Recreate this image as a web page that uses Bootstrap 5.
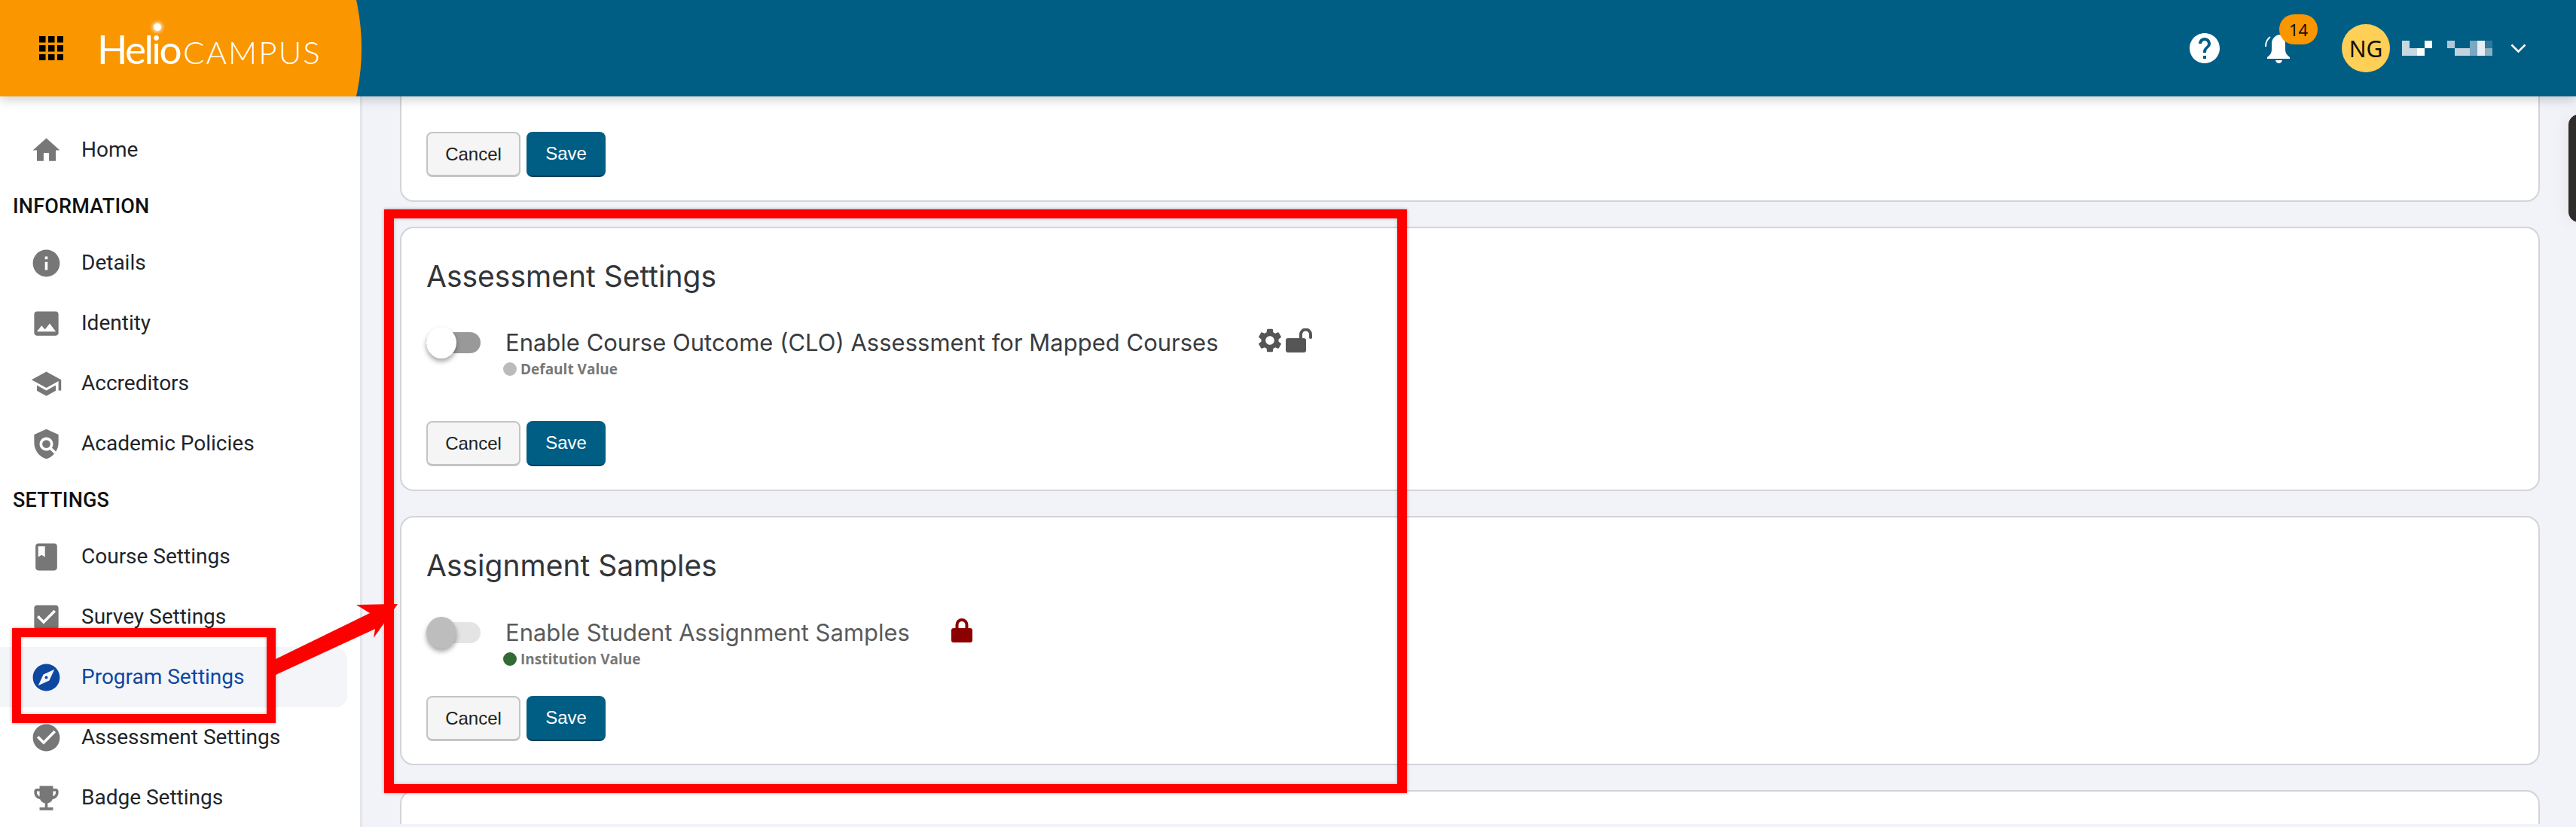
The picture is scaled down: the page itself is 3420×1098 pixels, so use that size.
<!DOCTYPE html>
<html lang="en">
<head>
<meta charset="utf-8">
<title>HelioCampus Program Settings</title>
<link href="https://cdn.jsdelivr.net/npm/bootstrap@5.3.0/dist/css/bootstrap.min.css" rel="stylesheet">
<style>
html,body{height:1098px;overflow:hidden}
body{background:#f1f3f8;font-family:Roboto,"Liberation Sans",sans-serif;color:#212529;position:relative}
.hc-top{height:128px;background:#005e85;box-shadow:0 4px 14px rgba(0,0,0,.2);position:relative;z-index:5}
.hc-brand{width:480px;height:128px;background:#fa9600;clip-path:circle(296px at 184px 64px);padding-left:52px;gap:45px}
.hc-logo{color:#fff;font-family:Lato,sans-serif;line-height:1;position:relative;white-space:nowrap}
.hc-helio{font-size:53px;letter-spacing:-2.6px;font-weight:400}
.hc-campus{font-size:42px;font-weight:300;letter-spacing:2.1px;margin-left:4px}
.hc-spark{position:absolute;left:75px;top:-7px;width:10px;height:10px;border-radius:50%;background:#fff;box-shadow:0 0 4px 2px rgba(255,255,255,.7)}
.hc-tools{padding-right:66px;font-family:"Noto Sans",sans-serif}
.hc-bell{position:relative;width:38px;height:40px;margin-left:59px}
.hc-count{position:absolute;left:20px;top:-25px;width:51px;height:40px;background:#fa9600;border-radius:20px;color:#111;font-size:22px;line-height:40px;text-align:center}
.hc-avatar{width:64px;height:64px;border-radius:50%;background:#ffd055;color:#111;font-size:30px;margin-left:65px}
.hc-body{height:970px;overflow:hidden}
.hc-side{width:481px;flex:none;background:#fff;border-right:3px solid #e3e5ea;padding-top:31px;overflow:hidden}
.hc-item{height:80px;margin-right:17px;padding-left:40px;gap:25px;font-size:28px;color:#212529;border-radius:0 16px 16px 0;text-decoration:none}
.hc-item svg{width:43px;height:43px;fill:#777;flex:none;display:block}
.hc-item.hc-on{background:#f4f5f8;color:#0d47a1}
.hc-item.hc-on svg{fill:#0d47a1}
.hc-sec{font-size:27px;font-weight:500;color:#111;height:70px;padding-left:17px;letter-spacing:.2px}
.hc-main{padding-left:50px;padding-right:48px;min-width:0;overflow:hidden}
.hc-panel{border:2px solid #d2d4d8;border-radius:18px;background:#fff;padding:0 33px;margin-bottom:33px;flex:none}
.hc-panel-a{border-top:0;border-radius:0 0 18px 18px;height:140px;padding-top:47px}
.hc-panel-b{height:351px;padding-top:36px}
.hc-panel-c{height:331px;padding-top:36px}
.hc-panel-d{height:45px;margin-bottom:0;border-bottom:0;border-radius:18px 18px 0 0}
.hc-title{font-family:Inter,sans-serif;font-size:39px;font-weight:400;color:#333538;line-height:56px;margin:0}
.hc-row{margin-top:39px;height:125px}
.hc-panel-c .hc-row{margin-top:40px;height:105px}
.hc-switch{width:72px;height:28px;border-radius:14px;background:#999;position:relative;margin-top:7px;flex:none}
.hc-switch::after{content:"";position:absolute;left:0;top:-7px;width:40px;height:42px;border-radius:50%;background:#fff;box-shadow:0 4px 6px rgba(0,0,0,.35)}
.hc-switch.hc-off{background:#e4e4e4}
.hc-switch.hc-off::after{background:#bdbdbd}
.hc-label{font-family:Inter,sans-serif;font-size:31px;line-height:42px;color:#3a3c3e;margin-left:33px}
.hc-panel-c .hc-label{color:#5a5a5a}
.hc-note{font-family:"Open Sans",sans-serif;font-size:19px;font-weight:700;color:#777;line-height:24px;margin-left:102px;margin-top:2px;gap:5px}
.hc-dot{width:18px;height:18px;border-radius:50%;background:#bbb;flex:none;margin-top:3px}
.hc-dot.hc-green{background:#336b36}
.hc-acts{gap:8px}
.hc-acts .btn{height:60px;font-family:"Liberation Sans",sans-serif;font-size:24px;border-radius:8px;padding:0;line-height:56px}
.hc-cancel{width:125px;background:#f5f5f5;border:2px solid #c4c4c4;border-bottom-width:3px;color:#222}
.hc-save{width:105px;background:#005e85;border:0;border-bottom:2px solid #00405c;color:#fff}
.hc-gear{width:32px;height:32px;fill:#555;display:block;margin-left:52px;margin-top:2px}
.hc-unlock{margin-left:5px;margin-top:2px}
.hc-lock{margin-left:55px;margin-top:2px}
.hc-mark{position:absolute;border:12px solid #f00;box-shadow:0 0 4px rgba(0,0,0,.35),inset 0 0 4px rgba(0,0,0,.25);z-index:9;pointer-events:none}
.hc-mark-a{left:16px;top:834px;width:350px;height:126px}
.hc-mark-b{left:510px;top:278px;width:1358px;height:775px;border-width:12px 13px}
.hc-arrow{position:absolute;left:0;top:0;z-index:10;pointer-events:none}
.hc-tab{position:absolute;left:3410px;top:152px;width:20px;height:143px;background:#2f2b2b;border-radius:14px 0 0 14px;z-index:3;box-shadow:0 0 24px rgba(0,0,0,.07)}
</style>
</head>
<body>
<header class="hc-top d-flex justify-content-between align-items-center">
  <div class="hc-brand d-flex align-items-center">
    <svg width="32" height="32" viewBox="0 0 32 32" aria-hidden="true"><g fill="#000"><rect width="8.5" height="8.5"/><rect x="12" width="8.5" height="8.5"/><rect x="24" width="8.5" height="8.5"/><rect y="12" width="8.5" height="8.5"/><rect x="12" y="12" width="8.5" height="8.5"/><rect x="24" y="12" width="8.5" height="8.5"/><rect y="24" width="8.5" height="8.5"/><rect x="12" y="24" width="8.5" height="8.5"/><rect x="24" y="24" width="8.5" height="8.5"/></g></svg>
    <div class="hc-logo"><span class="hc-spark"></span><span class="hc-helio">Helio</span><span class="hc-campus">CAMPUS</span></div>
  </div>
  <div class="hc-tools d-flex align-items-center">
    <svg width="40" height="40" viewBox="2 2 20 20" fill="#fff" aria-hidden="true"><path d="M12 2C6.48 2 2 6.48 2 12s4.48 10 10 10 10-4.48 10-10S17.52 2 12 2zm1 17h-2v-2h2v2zm2.07-7.75l-.9.92C13.45 12.9 13 13.5 13 15h-2v-.5c0-1.1.45-2.1 1.17-2.83l1.24-1.26c.37-.36.59-.86.59-1.41 0-1.1-.9-2-2-2s-2 .9-2 2H8c0-2.21 1.79-4 4-4s4 1.79 4 4c0 .88-.36 1.68-.93 2.25z"/></svg>
    <div class="hc-bell">
      <svg width="38" height="40" viewBox="0 0 38 40" aria-hidden="true"><path fill="#fff" d="M20 2c-6 1-10 6-10 12v8c0 4-2 7-6 10v2h30v-2c-4-3-6-6-6-10v-8c0-6-3-11-8-12z"/><path fill="#fff" d="M15 36h9c-.5 2.500-2.500 4-4.500 4S15.500 38.500 15 36z"/><path fill="none" stroke="#fff" stroke-width="2" d="M2 18c0-5 2-10 6-13"/></svg>
      <span class="hc-count">14</span>
    </div>
    <div class="hc-avatar d-flex align-items-center justify-content-center">NG</div>
    <svg class="ms-3" width="120" height="20" viewBox="0 0 120 20" aria-hidden="true"><rect width="10" height="10" fill="#c8d8e2"/><rect x="30" width="10" height="10" fill="#fff"/><rect y="10" width="20" height="10" fill="#c8d8e2"/><rect x="20" y="10" width="10" height="10" fill="#fff"/><rect x="60" width="10" height="10" fill="#b0c8d6"/><rect x="90" width="10" height="20" fill="#7aa8c0"/><rect x="100" width="10" height="20" fill="#e6eef3"/><rect x="110" width="10" height="10" fill="#2f7a9c"/><rect x="70" y="10" width="20" height="10" fill="#c0d4df"/><rect x="110" y="10" width="10" height="10" fill="#8ab0c6"/></svg>
    <svg class="ms-4" width="21" height="12" viewBox="0 0 21 12" aria-hidden="true"><path d="M1.500 1.500l9 9 9-9" fill="none" stroke="#fff" stroke-width="2.500"/></svg>
  </div>
</header>

<div class="hc-body d-flex">
  <nav class="hc-side">
    <a class="hc-item d-flex align-items-center" href="#"><svg viewBox="0 0 24 24"><path d="M10 20v-6h4v6h5v-8h3L12 3 2 12h3v8z"/></svg>Home</a>
    <div class="hc-sec d-flex align-items-center">INFORMATION</div>
    <a class="hc-item d-flex align-items-center" href="#"><svg viewBox="0 0 24 24"><path d="M12 2C6.480 2 2 6.480 2 12s4.480 10 10 10 10-4.480 10-10S17.520 2 12 2zm1 15h-2v-6h2v6zm0-8h-2V7h2v2z"/></svg>Details</a>
    <a class="hc-item d-flex align-items-center" href="#"><svg viewBox="0 0 24 24"><path d="M21 19V5c0-1.100-.9-2-2-2H5c-1.100 0-2 .9-2 2v14c0 1.100.9 2 2 2h14c1.100 0 2-.9 2-2zM8.500 13.500l2.500 3.010L14.500 12l4.500 6H5l3.500-4.500z"/></svg>Identity</a>
    <a class="hc-item d-flex align-items-center" href="#"><svg viewBox="0 0 24 24"><path d="M5 13.180v4L12 21l7-3.820v-4L12 17l-7-3.820zM12 3L1 9l11 6 9-4.910V17h2V9L12 3z"/></svg>Accreditors</a>
    <a class="hc-item d-flex align-items-center" href="#"><svg viewBox="0 0 24 24"><path d="M21 5l-9-4-9 4v6c0 5.550 3.840 10.740 9 12 2.300-.56 4.330-1.900 5.880-3.710l-3.120-3.120c-1.940 1.290-4.580 1.070-6.290-.64-1.950-1.950-1.950-5.120 0-7.070 1.950-1.950 5.120-1.950 7.070 0 1.710 1.710 1.920 4.350.64 6.290l2.900 2.900C20.290 15.690 21 13.380 21 11V5z"/><circle cx="12" cy="12" r="3"/></svg>Academic Policies</a>
    <div class="hc-sec d-flex align-items-center">SETTINGS</div>
    <a class="hc-item d-flex align-items-center" href="#"><svg viewBox="0 0 24 24"><path d="M18 2H6c-1.100 0-2 .9-2 2v16c0 1.100.9 2 2 2h12c1.100 0 2-.9 2-2V4c0-1.100-.9-2-2-2zM6 4h5v8l-2.500-1.500L6 12V4z"/></svg>Course Settings</a>
    <a class="hc-item d-flex align-items-center" href="#"><svg viewBox="0 0 24 24"><path d="M19 3H5c-1.110 0-2 .9-2 2v14c0 1.100.89 2 2 2h14c1.110 0 2-.9 2-2V5c0-1.100-.89-2-2-2zm-9 14l-5-5 1.410-1.410L10 14.170l7.590-7.590L19 8l-9 9z"/></svg>Survey Settings</a>
    <a class="hc-item hc-on d-flex align-items-center" href="#"><svg viewBox="0 0 24 24"><path d="M12 10.900c-.61 0-1.100.49-1.100 1.100s.49 1.100 1.100 1.100c.61 0 1.100-.49 1.100-1.100s-.49-1.100-1.100-1.100zM12 2C6.480 2 2 6.480 2 12s4.480 10 10 10 10-4.480 10-10S17.520 2 12 2zm2.190 12.190L6 18l3.810-8.190L18 6l-3.810 8.190z"/></svg>Program Settings</a>
    <a class="hc-item d-flex align-items-center" href="#"><svg viewBox="0 0 24 24"><path d="M12 2C6.480 2 2 6.480 2 12s4.480 10 10 10 10-4.480 10-10S17.520 2 12 2zm-2 15l-5-5 1.410-1.410L10 14.170l7.590-7.590L19 8l-9 9z"/></svg>Assessment Settings</a>
    <a class="hc-item d-flex align-items-center" href="#"><svg viewBox="0 0 24 24"><path d="M19 5h-2V3H7v2H5c-1.100 0-2 .9-2 2v1c0 2.550 1.920 4.630 4.390 4.940.63 1.500 1.980 2.630 3.610 2.960V19H7v2h10v-2h-4v-3.100c1.630-.33 2.980-1.460 3.610-2.960C19.080 12.630 21 10.550 21 8V7c0-1.100-.9-2-2-2zM5 8V7h2v3.820C5.840 10.400 5 9.300 5 8zm14 0c0 1.300-.84 2.400-2 2.820V7h2v1z"/></svg>Badge Settings</a>
  </nav>

  <main class="hc-main flex-grow-1 d-flex flex-column">
    <section class="hc-panel hc-panel-a">
      <div class="hc-acts d-flex"><button class="btn hc-cancel">Cancel</button><button class="btn hc-save">Save</button></div>
    </section>
    <section class="hc-panel hc-panel-b">
      <h4 class="hc-title">Assessment Settings</h4>
      <div class="hc-row">
        <div class="d-flex align-items-start">
          <span class="hc-switch"></span>
          <span class="hc-label">Enable Course Outcome (CLO) Assessment for Mapped Courses</span>
          <svg class="hc-gear" viewBox="2.500 2 19 20"><path d="M19.140 12.940c.04-.3.060-.61.060-.94 0-.32-.02-.64-.07-.94l2.030-1.580c.18-.14.23-.41.120-.61l-1.920-3.320c-.12-.22-.37-.29-.59-.22l-2.390.96c-.5-.38-1.030-.7-1.620-.94l-.36-2.540c-.04-.24-.24-.41-.48-.41h-3.840c-.24 0-.43.170-.47.410l-.36 2.540c-.59.24-1.130.57-1.620.94l-2.390-.96c-.22-.08-.47 0-.59.220L2.740 8.870c-.12.210-.08.470.120.610l2.030 1.580c-.05.3-.09.63-.09.94s.02.640.07.940l-2.030 1.580c-.18.140-.23.410-.12.610l1.920 3.320c.12.220.37.290.59.220l2.390-.96c.5.380 1.030.7 1.620.94l.36 2.540c.05.240.24.410.48.410h3.840c.24 0 .44-.17.47-.41l.36-2.540c.59-.24 1.130-.56 1.620-.94l2.390.96c.22.080.47 0 .59-.22l1.920-3.320c.12-.22.070-.47-.12-.61l-2.010-1.580zM12 15.600c-1.980 0-3.600-1.620-3.600-3.600s1.620-3.600 3.600-3.600 3.600 1.620 3.600 3.600-1.620 3.600-3.600 3.600z"/></svg>
          <svg class="hc-unlock" width="36" height="32" viewBox="0 0 36 32"><rect y="13" width="27" height="19" rx="3" fill="#555"/><path d="M20 14V8a6.500 6.500 0 0 1 13 0v4" fill="none" stroke="#555" stroke-width="4" stroke-linecap="round"/></svg>
        </div>
        <div class="d-flex hc-note"><span class="hc-dot"></span>Default Value</div>
      </div>
      <div class="hc-acts d-flex"><button class="btn hc-cancel">Cancel</button><button class="btn hc-save">Save</button></div>
    </section>
    <section class="hc-panel hc-panel-c">
      <h4 class="hc-title">Assignment Samples</h4>
      <div class="hc-row">
        <div class="d-flex align-items-start">
          <span class="hc-switch hc-off"></span>
          <span class="hc-label">Enable Student Assignment Samples</span>
          <svg class="hc-lock" width="28" height="32" viewBox="0 0 28 32"><rect y="13" width="28" height="19" rx="3" fill="#8b0000"/><path d="M7.500 14V8.500a6.500 6.500 0 0 1 13 0V14" fill="none" stroke="#8b0000" stroke-width="4"/></svg>
        </div>
        <div class="d-flex hc-note"><span class="hc-dot hc-green"></span>Institution Value</div>
      </div>
      <div class="hc-acts d-flex"><button class="btn hc-cancel">Cancel</button><button class="btn hc-save">Save</button></div>
    </section>
    <section class="hc-panel hc-panel-d"></section>
  </main>
</div>

<div class="hc-tab"></div>
<div class="hc-mark hc-mark-a"></div>
<div class="hc-mark hc-mark-b"></div>
<svg class="hc-arrow" width="560" height="1000" viewBox="0 0 560 1000" aria-hidden="true"><polygon points="366,875 491,814 473,803 528,802 496,847 498,835 366,896" fill="#f00"/></svg>
</body>
</html>
